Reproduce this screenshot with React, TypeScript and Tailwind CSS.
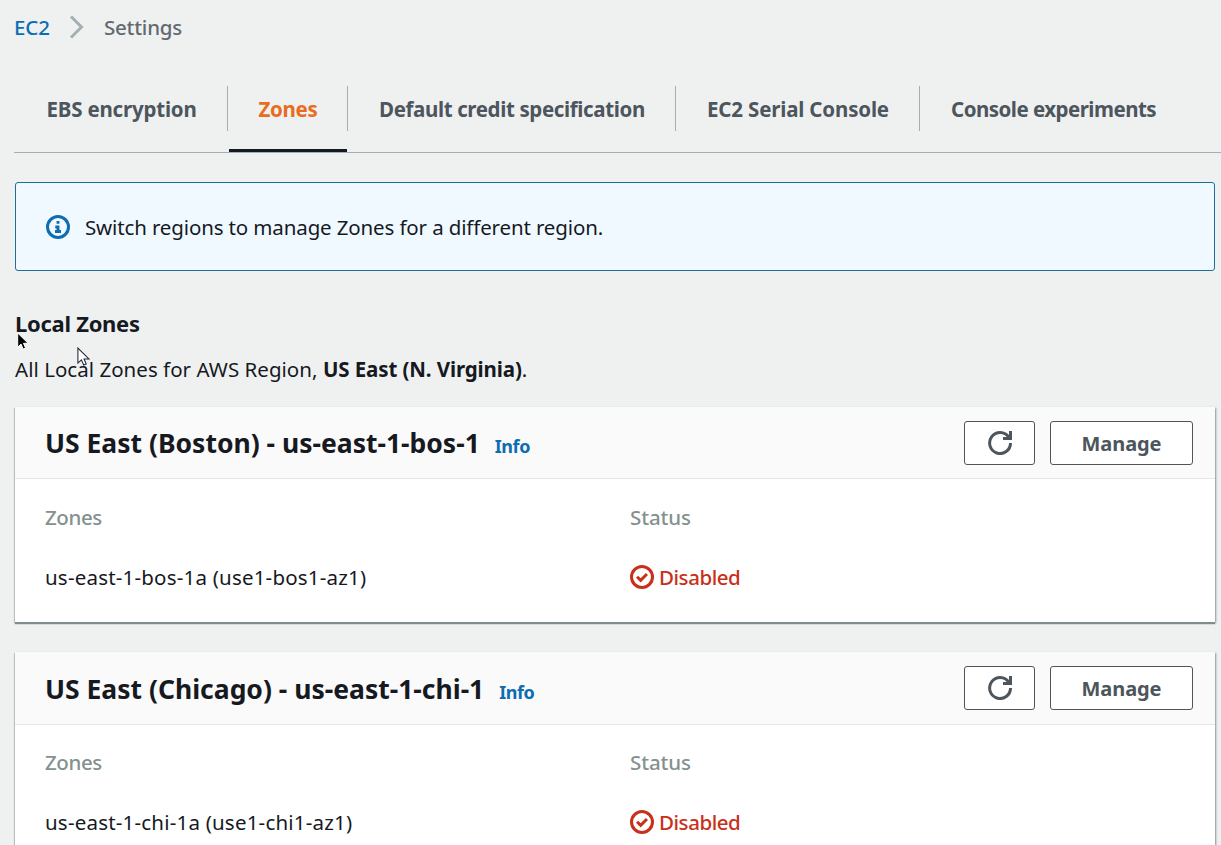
import type { ReactNode } from "react";

function InfoIcon() {
  return (
    <svg className="size-6 shrink-0" viewBox="0 0 16 16" fill="none" stroke="#0e6cb0" strokeWidth="2">
      <circle cx="8" cy="8" r="7" />
      <path d="M8 11V8H6.2M6 11h4M8 5.9V4" strokeWidth="1.9" />
    </svg>
  );
}

function RefreshIcon() {
  return (
    <svg className="size-6" viewBox="0 0 16 16" fill="none" stroke="#4d555d" strokeWidth="2">
      <path d="M10 5h5V0" />
      <path d="M15 8a6.95 7 0 1 1-1.2-3.9L15 5" />
    </svg>
  );
}

function StatusIcon() {
  return (
    <svg className="size-6 shrink-0" viewBox="0 0 16 16" fill="none" stroke="#c9301a" strokeWidth="2">
      <circle cx="8" cy="8" r="7" />
      <path d="M4.7 7.8l2.4 2.4 4.2-4.2" />
    </svg>
  );
}

function Button({ className, children }: { className: string; children: ReactNode }) {
  return (
    <button
      className={`flex h-11 items-center justify-center rounded-[3px] border border-[#4d555d] bg-white font-bold text-[#4d555d] ${className}`}
    >
      {children}
    </button>
  );
}

const tabs = [
  { label: "EBS encryption", box: "w-[213px] pl-[31.5px]", text: "tracking-[-0.2px]" },
  { label: "Zones", box: "w-[120px] pl-[30.5px]", text: "tracking-[-0.3px]", active: true },
  { label: "Default credit specification", box: "w-[328px] pl-[31px]", text: "tracking-[-0.37px]" },
  { label: "EC2 Serial Console", box: "w-[244px] pl-[31px]", text: "tracking-[-0.17px]" },
  { label: "Console experiments", box: "w-[300px] pl-[31px]", text: "tracking-[-0.52px]" },
];

function Tabs() {
  return (
    <nav className="ml-[14px] flex h-[67px] border-b border-[#a3b0b1] pl-px">
      {tabs.map((t, i) => (
        <div key={t.label} className={`relative h-[45px] shrink-0 pt-2 font-bold ${t.box} ${i < tabs.length - 1 ? "border-r border-[#a3b0b1]" : ""}`}>
          <a className={`whitespace-nowrap ${t.text} ${t.active ? "text-[#e96c20]" : "text-[#4d555d]"}`}>{t.label}</a>
          {t.active && <span className="absolute left-px right-0 top-[63px] h-[3px] bg-[#16191f]" />}
        </div>
      ))}
    </nav>
  );
}

const zones = [
  { title: "US East (Boston) - us-east-1-bos-1", zone: "us-east-1-bos-1a (use1-bos1-az1)" },
  { title: "US East (Chicago) - us-east-1-chi-1", zone: "us-east-1-chi-1a (use1-chi1-az1)" },
];

function ZoneCard({ title, zone }: { title: string; zone: string }) {
  return (
    <section className="bg-white shadow-[0_2px_1px_0_#7e8d8d,1px_1px_2px_0_#8f9c9c,-1px_1px_1px_0_#c8cece]">
      <header className="flex h-[72.2px] border-b border-[#e3e7e7] bg-[#fafafa] pl-[30px] pr-[22px]">
        <h3 className="mt-[17.2px] text-[26.5px] font-bold leading-[38px] tracking-[0px]">{title}</h3>
        <a className="ml-[15px] mt-[26.2px] text-[18px] font-bold leading-[27px] tracking-[-0.45px] text-[#0e6cb0]">Info</a>
        <div className="ml-auto mt-[13.6px] flex gap-[15px]">
          <Button className="w-[71px]">
            <RefreshIcon />
          </Button>
          <Button className="w-[143px] pt-[2px] text-[20px] tracking-[-0.1px]">Manage</Button>
        </div>
      </header>
      <div className="grid grid-cols-[585px_1fr] gap-y-[30px] pb-[30.4px] pl-[30px] pt-[22.4px]">
        <div className="font-medium tracking-[-0.4px] text-[#84918f]">Zones</div>
        <div className="font-medium tracking-[-0.1px] text-[#84918f]">Status</div>
        <div className="tracking-[0.2px]">{zone}</div>
        <div className="flex items-center gap-[5px] font-medium tracking-[-0.45px] text-[#c9301a]">
          <StatusIcon />
          Disabled
        </div>
      </div>
    </section>
  );
}

function Cursor({ className, fill, stroke }: { className: string; fill: string; stroke: string }) {
  return (
    <svg className={`absolute ${className}`} viewBox="0 0 12 18" fill={fill} stroke={stroke} strokeWidth="1">
      <path d="M.7 1v14.2l3.3-3.1 2.2 5 2.4-1-2.1-4.8h4.6z" />
    </svg>
  );
}

export default function App() {
  return (
    <div className="relative h-[845px] w-full overflow-hidden bg-[#eff1f1] font-['Noto_Sans',sans-serif] text-[20.5px] leading-[30px] text-[#16191f]">
      <div className="flex h-[86px] items-start pl-[14px] pt-3">
        <a className="font-medium tracking-[-0.1px] text-[#0e6cb0]">EC2</a>
        <svg className="ml-[19px] mt-[3px] h-6 w-4" viewBox="0 0 16 24" fill="none" stroke="#a3b0b1" strokeWidth="3">
          <path d="M2 1.5L12.5 12 2 22.5" />
        </svg>
        <span className="ml-[19px] font-medium tracking-[-0.2px] text-[#62696f]">Settings</span>
      </div>
      <Tabs />
      <main className="ml-[15px] w-[1200px] pt-[29px]">
        <div className="flex h-[89px] items-center gap-[15px] rounded-[3px] border border-[#1c6f98] bg-[#eff9ff] pl-[30px]">
          <InfoIcon />
          <span className="tracking-[-0.135px]">Switch regions to manage Zones for a different region.</span>
        </div>
        <h2 className="mt-[36px] text-[22px] font-bold leading-[33px] tracking-[-0.28px]">Local Zones</h2>
        <p className="mt-[14px] tracking-[0.03px]">
          All Local Zones for AWS Region, <b className="tracking-[-0.11px]">US East (N. Virginia)</b>.
        </p>
        <div className="mt-[23px] flex flex-col gap-[30.5px]">
          {zones.map((z) => (
            <ZoneCard key={z.zone} {...z} />
          ))}
        </div>
      </main>
      <Cursor className="left-[17px] top-[332px] h-[18px] w-3" fill="#000" stroke="#fff" />
      <Cursor className="left-[77px] top-[347px] h-[19px] w-[13px]" fill="#fff" stroke="#222638" />
    </div>
  );
}
